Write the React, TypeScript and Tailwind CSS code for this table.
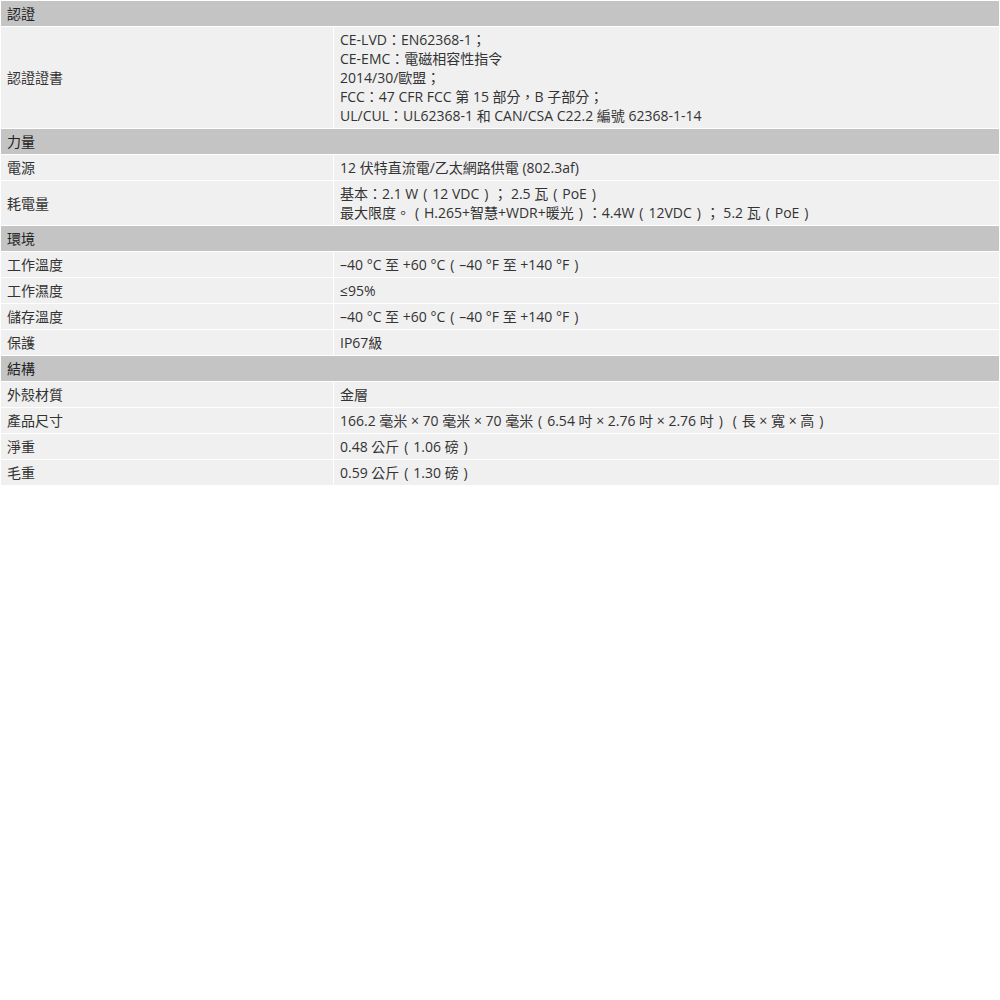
const font = "font-['Open_Sans','Noto_Sans_CJK_TC',sans-serif]";

type Row = { label: string; value: string[] };
type Section = { title: string; rows: Row[] };

const sections: Section[] = [
  {
    title: "認證",
    rows: [
      {
        label: "認證證書",
        value: [
          "CE-LVD：EN62368-1；",
          "CE-EMC：電磁相容性指令",
          "2014/30/歐盟；",
          "FCC：47 CFR FCC 第 15 部分，B 子部分；",
          "UL/CUL：UL62368-1 和 CAN/CSA C22.2 編號 62368-1-14",
        ],
      },
    ],
  },
  {
    title: "力量",
    rows: [
      { label: "電源", value: ["12 伏特直流電/乙太網路供電 (802.3af)"] },
      {
        label: "耗電量",
        value: [
          "基本：2.1 W（12 VDC）； 2.5 瓦（PoE）",
          "最大限度。（H.265+智慧+WDR+暖光）：4.4W（12VDC）； 5.2 瓦（PoE）",
        ],
      },
    ],
  },
  {
    title: "環境",
    rows: [
      { label: "工作溫度", value: ["–40 °C 至 +60 °C（–40 °F 至 +140 °F）"] },
      { label: "工作濕度", value: ["≤95%"] },
      { label: "儲存溫度", value: ["–40 °C 至 +60 °C（–40 °F 至 +140 °F）"] },
      { label: "保護", value: ["IP67級"] },
    ],
  },
  {
    title: "結構",
    rows: [
      { label: "外殼材質", value: ["金層"] },
      { label: "產品尺寸", value: ["166.2 毫米 × 70 毫米 × 70 毫米（6.54 吋 × 2.76 吋 × 2.76 吋）（長 × 寬 × 高）"] },
      { label: "淨重", value: ["0.48 公斤（1.06 磅）"] },
      { label: "毛重", value: ["0.59 公斤（1.30 磅）"] },
    ],
  },
];

// full-width parens render centred in the original, so draw them that way
function Line({ text }: { text: string }) {
  const parts = text.split(/([（）])/);
  return (
    <div className="h-[19px] whitespace-nowrap">
      {parts.map((p, i) =>
        p === "（" || p === "）" ? (
          <span key={i} className="inline-block w-[1em] text-center">
            {p === "（" ? "(" : ")"}
          </span>
        ) : (
          <span key={i}>{p}</span>
        )
      )}
    </div>
  );
}

export default function App() {
  return (
    <div className={`w-[1000px] min-h-[1000px] bg-white text-[14px] leading-[19px] text-[#333] ${font}`}>
      <table className="w-full border-separate border-spacing-[1px]">
        <colgroup>
          <col className="w-[332px]" />
          <col />
        </colgroup>
        <tbody>
          {sections.map((section) => (
            <>
              <tr key={section.title}>
                <td colSpan={2} className="bg-[#c4c4c4] px-[6px] py-[3px] text-[#222]">
                  <div className="h-[19px]">{section.title}</div>
                </td>
              </tr>
              {section.rows.map((row) => (
                <tr key={row.label}>
                  <td className="bg-[#f0f0f0] px-[6px] py-[3px] align-middle">
                    <div className="h-[19px]">{row.label}</div>
                  </td>
                  <td className="bg-[#f0f0f0] px-[6px] py-[3px] align-middle">
                    {row.value.map((line, i) => (
                      <Line key={i} text={line} />
                    ))}
                  </td>
                </tr>
              ))}
            </>
          ))}
        </tbody>
      </table>
    </div>
  );
}
